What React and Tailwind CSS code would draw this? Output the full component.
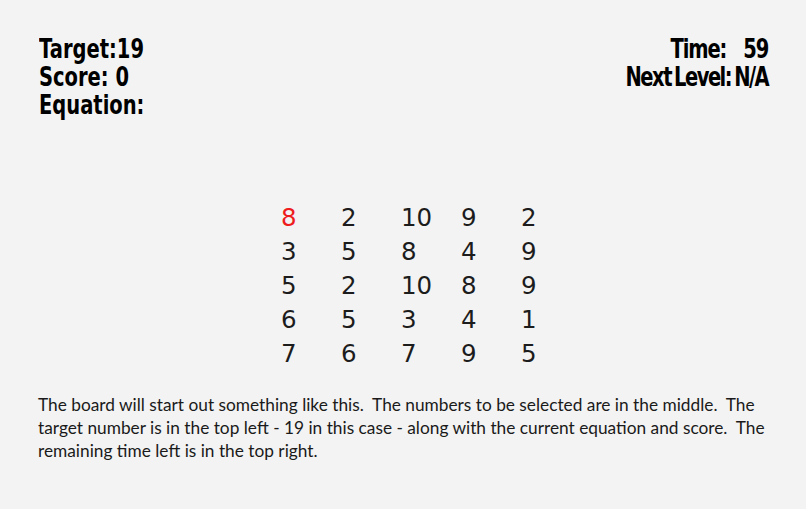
const board = [
  [8, 2, 10, 9, 2],
  [3, 5, 8, 4, 9],
  [5, 2, 10, 8, 9],
  [6, 5, 3, 4, 1],
  [7, 6, 7, 9, 5],
];

// condensed headline look: bold DejaVu squeezed horizontally
const heading = "font-['DejaVu_Sans',sans-serif] font-bold text-[26px] leading-[28px] text-black whitespace-pre scale-x-[0.75]";

export default function App() {
  return (
    <div className="w-[806px] h-[509px] bg-[#f3f3f3] overflow-hidden">
      <div className="flex justify-between pl-[39px] pr-[38px] pt-[35px]">
        <div className={heading + " origin-left"}>
          <div>Target:19</div>
          <div>Score: 0</div>
          <div>Equation:</div>
        </div>
        <div className={heading + " origin-right text-right"}>
          <div className="tracking-[-1.5px]">Time:   59</div>
          <div className="tracking-[-2px] [word-spacing:-3px]">Next Level: N/A</div>
        </div>
      </div>

      <div className="ml-[281px] mt-[82px] grid grid-cols-[repeat(5,60px)] font-['DejaVu_Sans',sans-serif] text-[24.5px] leading-[34px] text-[#1c1c1c]">
        {board.map((row, r) =>
          row.map((n, c) => (
            <div key={r + "-" + c} className={r === 0 && c === 0 ? "text-[#ee1c1c]" : ""}>
              {n}
            </div>
          ))
        )}
      </div>

      <p className="ml-[38px] mt-[22px] whitespace-pre-wrap font-['Lato',sans-serif] text-[17.3px] leading-[23px] text-[#1a1a1a]">
        The board will start out something like this.  The numbers to be selected are in the middle.  The
        <br />
        target number is in the top left - 19 in this case - along with the current equation and score.  The
        <br />
        remaining time left is in the top right.
      </p>
    </div>
  );
}
